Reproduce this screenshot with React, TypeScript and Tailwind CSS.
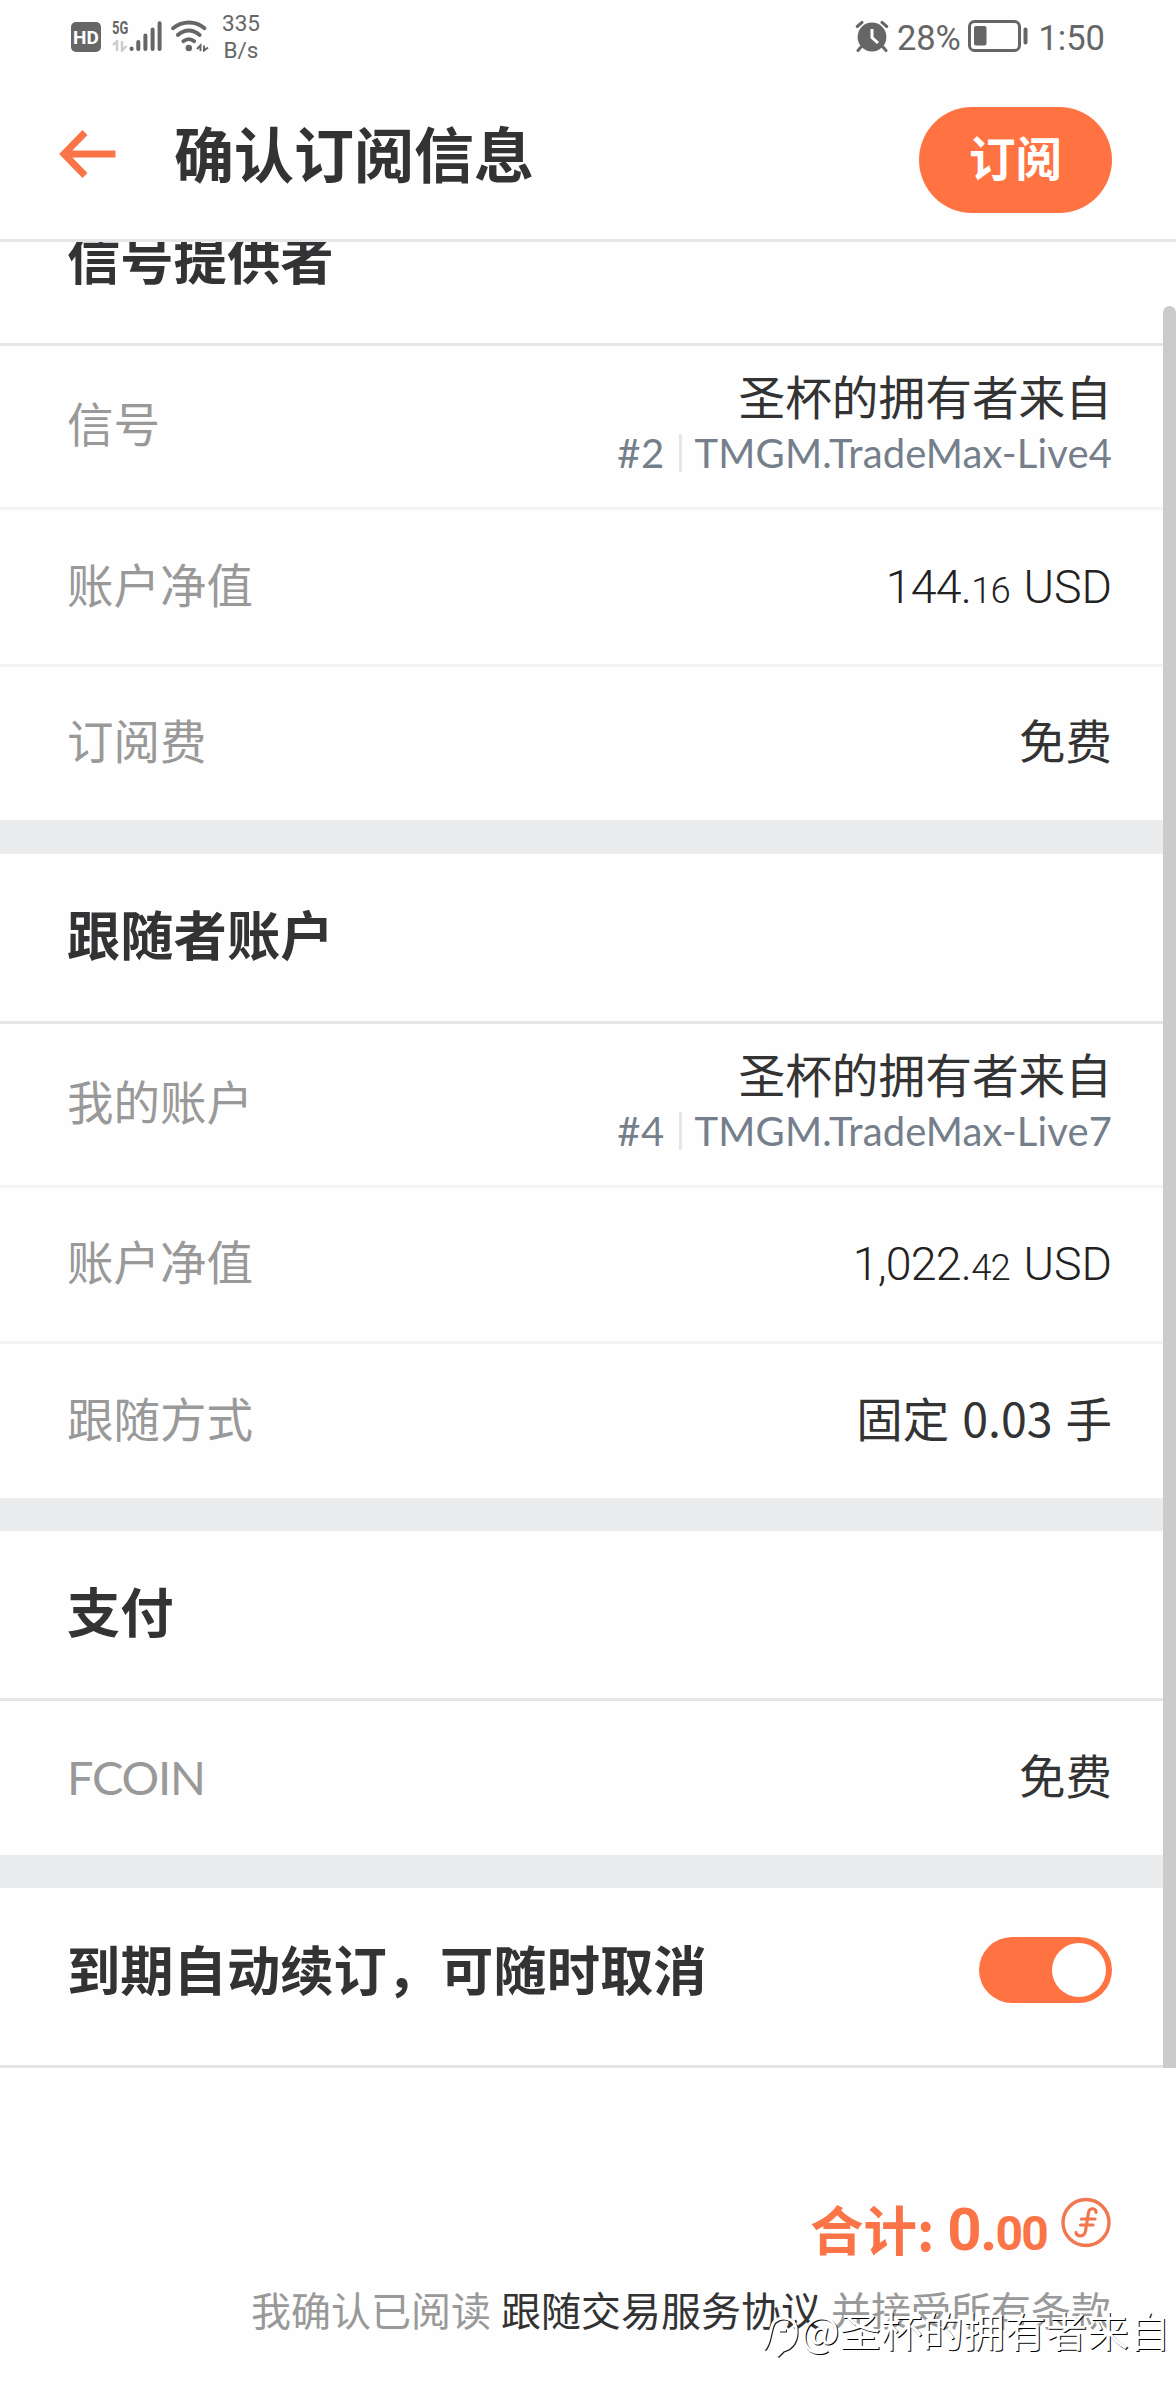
import type { ReactNode } from "react";

function Line({ light = false }: { light?: boolean }) {
  return <div className={light ? "h-[3px] shrink-0 bg-[#f3f3f3]" : "h-[3px] shrink-0 bg-[#e4e5e6]"} />;
}

function Gap({ height = "h-[33px]" }: { height?: string }) {
  return <div className={`shrink-0 bg-[#ebecee] ${height}`} />;
}

function SectionTitle({ children }: { children: ReactNode }) {
  return (
    <div className="flex h-[167px] shrink-0 items-center pb-[9px] pl-[67px] text-[53.3px] font-bold leading-none text-[#333336]">
      {children}
    </div>
  );
}

function Row({ label, height = "h-[153px]", children }: { label: ReactNode; height?: string; children: ReactNode }) {
  return (
    <div className={`flex shrink-0 items-center justify-between pl-[67px] pr-[51px] text-[46.5px] leading-none ${height}`}>
      <span className="pb-[8px] text-[#999]">{label}</span>
      {children}
    </div>
  );
}

function Value({ children }: { children: ReactNode }) {
  return <span className="pb-[8px] text-[#333] [word-spacing:2.5px]">{children}</span>;
}

function Account({ id, server }: { id: string; server: string }) {
  return (
    <div className="flex flex-col items-end pb-[7px]">
      <span className="text-[46.7px] leading-[56px] text-[#333]">圣杯的拥有者来自</span>
      <span className="mt-[3px] flex h-[54px] items-center font-['Lato','Noto_Sans_CJK_SC',sans-serif] text-[40px] leading-none text-[#757f8c]">
        <span className="tracking-[0.5px]">{id}</span>
        <span className="ml-[14px] mr-[13px] h-[38px] w-[3px] bg-[#e6e6e6]" />
        <span className="tracking-[0.12px]">{server}</span>
      </span>
    </div>
  );
}

function Money({ whole, cents }: { whole: string; cents: string }) {
  return (
    <span className="font-['Roboto',sans-serif] font-light leading-none text-[#222]">
      <span className="tracking-[-0.8px]">
        {whole}.<span className="mr-[2px] text-[36.5px]">{cents}</span>
      </span>{" "}
      USD
    </span>
  );
}

function StatusBar() {
  return (
    <div className="flex h-[72px] shrink-0 items-start justify-between pl-[71px] pr-[71px] font-['Roboto',sans-serif] text-[#666]">
      <div className="flex">
        <span className="mt-[22px] flex h-[30px] w-[30px] items-center justify-center rounded-[5px] bg-[#666] text-[19px] font-bold leading-none text-white">
          HD
        </span>
        <div className="ml-[11px] mt-[19px] w-[17px]">
          <div className="origin-left scale-x-[0.68] text-[19px] font-bold leading-[18px]">5G</div>
          <svg className="mt-[3px]" width="16" height="12" viewBox="0 0 16 12" fill="none" stroke="#ccc" strokeWidth="2.4">
            <path d="M1 5L5 1.5V11M10 1V10.5L14.5 6" />
          </svg>
        </div>
        <svg className="mt-[20px]" width="34" height="32" viewBox="0 0 34 32" stroke="#666" strokeWidth="4" strokeLinecap="round">
          <path d="M2.6 28.6V29M9.3 22V29M16.4 15.5V29M23.6 9.5V29M30.6 3.3V29" />
        </svg>
        <svg className="ml-[7px] mt-[20px]" width="40" height="32" viewBox="0 0 40 32" fill="none" stroke="#666" strokeWidth="3.8" strokeLinecap="round">
          <path d="M3 8.2C12.5 .6 25.5 .6 34.5 8.2M7.8 15C15 9 22.5 9 29.7 15M13.3 21.2C16.8 18.5 20.7 18.5 24.2 21.2" />
          <circle cx="18.8" cy="28" r="3.2" fill="#666" stroke="none" />
          <path d="M27 29L30.5 25.5V31M34 25.5V30.5L38 27.5" strokeWidth="2" strokeLinecap="butt" />
        </svg>
        <div className="ml-[9px] mt-[10px] flex w-[44px] flex-col items-center text-[22.5px] leading-[27px]">
          <span>335</span>
          <span>B/s</span>
        </div>
      </div>
      <div className="flex">
        <svg className="mt-[20px]" width="34" height="32" viewBox="0 0 34 32" fill="none">
          <circle cx="17" cy="17" r="14.4" fill="#666" />
          <path d="M2.3 6.5L7 2.4M27 2.4L31.7 6.5M6 27L3 30.5M28 27L31 30.5" stroke="#666" strokeWidth="3" strokeLinecap="round" />
          <path d="M17 9V17.5L23 23" stroke="#fff" strokeWidth="3" />
        </svg>
        <span className="ml-[8px] mt-[20px] text-[34.5px] leading-[36px] tracking-[-0.2px]">28%</span>
        <svg className="ml-[7px] mt-[19px]" width="62" height="34" viewBox="0 0 62 34" fill="none">
          <rect x="2.5" y="2.5" width="50" height="29" rx="5" stroke="#666" strokeWidth="3" />
          <rect x="7" y="7" width="12.5" height="19.5" rx="2" fill="#666" />
          <rect x="56.5" y="8.5" width="4" height="17" rx="2" fill="#666" />
        </svg>
        <span className="ml-[9px] mt-[20px] text-[34.5px] leading-[36px]">1:50</span>
      </div>
    </div>
  );
}

function Header() {
  return (
    <div className="flex h-[167px] shrink-0 items-start pl-[58px] pr-[64px]">
      <svg className="mt-[56px] shrink-0" width="60" height="52" viewBox="0 0 60 52" fill="none" stroke="#f97548" strokeWidth="7">
        <path d="M57.5 26H7M27 4.5L6 26L27 47.5" />
      </svg>
      <h1 className="ml-[56px] mt-[50px] grow text-[60px] font-bold leading-[60px] text-[#333]">确认订阅信息</h1>
      <button className="mt-[35px] flex h-[106px] w-[193px] shrink-0 items-center justify-center rounded-full bg-[#ff7342] pb-[7px] text-[46.5px] font-bold leading-none text-white">
        订阅
      </button>
    </div>
  );
}

function Coin() {
  return (
    <svg className="ml-[14px] mt-[10px]" width="50" height="52" viewBox="0 0 50 52" fill="none" stroke="#f0774f" strokeLinecap="round">
      <circle cx="25" cy="25.5" r="23" strokeWidth="3.4" />
      <path d="M35 15.5C35.5 11 28.5 10 27.5 15.5L24.5 34C23.5 40.5 15.5 40 15 35.5M20.5 22H34M19.5 28H32" strokeWidth="3.2" />
    </svg>
  );
}

export default function App() {
  return (
    <div className="relative flex h-[2400px] w-[1176px] flex-col overflow-hidden bg-[#fefefe] font-['Noto_Sans_CJK_SC',sans-serif]">
      <StatusBar />
      <Header />
      <Line />
      <main className="relative flex h-[1826px] shrink-0 flex-col overflow-hidden pr-[13px]">
        <div className="flex h-[101px] shrink-0 items-start pl-[67px] text-[53.3px] font-bold leading-none text-[#333336]">
          <span className="-mt-[12px]">信号提供者</span>
        </div>
        <Line />
        <Row label="信号" height="h-[161px]">
          <Account id="#2" server="TMGM.TradeMax-Live4" />
        </Row>
        <Line light />
        <Row label="账户净值" height="h-[154px]">
          <Money whole="144" cents="16" />
        </Row>
        <Line light />
        <Row label="订阅费">
          <Value>免费</Value>
        </Row>
        <Gap height="h-[34px]" />
        <SectionTitle>跟随者账户</SectionTitle>
        <Line />
        <Row label="我的账户" height="h-[161px]">
          <Account id="#4" server="TMGM.TradeMax-Live7" />
        </Row>
        <Line light />
        <Row label="账户净值">
          <Money whole="1,022" cents="42" />
        </Row>
        <Line light />
        <Row label="跟随方式" height="h-[154px]">
          <Value>固定 0.03 手</Value>
        </Row>
        <Gap />
        <SectionTitle>支付</SectionTitle>
        <Line />
        <Row
          height="h-[154px]"
          label={<span className="relative top-[2px] font-['Lato',sans-serif] text-[47px] tracking-[-1.2px]">FCOIN</span>}
        >
          <Value>免费</Value>
        </Row>
        <Gap />
        <div className="flex h-[177px] shrink-0 items-start justify-between pl-[67px] pr-[51px]">
          <span className="mt-[53px] text-[53.3px] font-bold leading-none text-[#333336]">到期自动续订，可随时取消</span>
          <span className="mt-[49px] flex h-[66px] w-[133px] justify-end rounded-full bg-[#ff7342] p-[6px]">
            <span className="h-[54px] w-[54px] rounded-full bg-white" />
          </span>
        </div>
        <Line />
        <div className="absolute bottom-0 right-0 top-[64px] w-[13px] rounded-t-[7px] bg-[#cbcbcb]" />
      </main>
      <footer className="flex flex-col items-end pr-[65px]">
        <div className="mt-[119px] flex h-[86px] items-start text-[#fb7447]">
          <span className="mt-[14px] text-[53.5px] font-bold leading-none">合计:</span>
          <span className="ml-[13px] mt-[12px] font-['Roboto',sans-serif] text-[60px] font-bold leading-[62px] tracking-[-1.8px]">
            0.<span className="text-[48px]">00</span>
          </span>
          <Coin />
        </div>
        <p className="mt-[16px] whitespace-pre text-[40px] leading-[40px] text-[#999] [word-spacing:1px]">
          我确认已阅读 <span className="text-[#333]">跟随交易服务协议</span> 并接受所有条款
        </p>
      </footer>
      <div className="absolute bottom-[41px] right-[6px] flex items-center text-white">
        <svg className="mr-[-2px] mt-[14px] overflow-visible" width="42" height="46" viewBox="0 0 42 46" fill="none" strokeWidth="3">
          <path d="M3 36C10 30 8 12 14 8C20 3 33 4 35 15C36 27 31 35 22 37L16 43M18 17H25" stroke="#222" transform="translate(1 1)" />
          <path d="M3 36C10 30 8 12 14 8C20 3 33 4 35 15C36 27 31 35 22 37L16 43M18 17H25" stroke="#fff" />
        </svg>
        <span className="text-[41.3px] leading-[56px] [text-shadow:1px_1px_0_#000]">@圣杯的拥有者来自</span>
      </div>
    </div>
  );
}
